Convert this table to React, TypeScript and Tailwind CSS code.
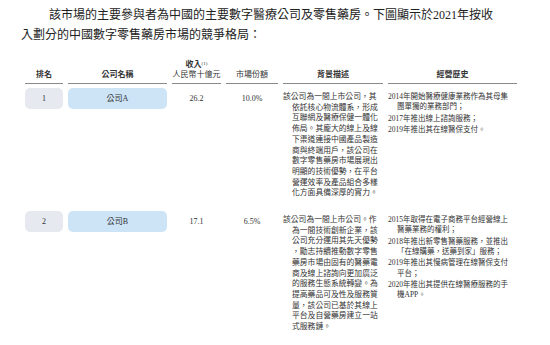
const cols = 'grid grid-cols-[38px_99px_49px_52px_100px_129px] gap-x-[5px]'

interface Row {
  rank: string
  name: string
  revenue: string
  share: string
  desc: string[]
  history: string[][]
}

const rows: Row[] = [
  {
    rank: '1',
    name: '公司A',
    revenue: '26.2',
    share: '10.0%',
    desc: [
      '該公司為一間上市公司，其',
      '依託核心物流體系，形成',
      '互聯網及醫療保健一體化',
      '佈局。其龐大的線上及線',
      '下渠道連接中國產品製造',
      '商與終端用戶，該公司在',
      '數字零售藥房市場展現出',
      '明顯的技術優勢，在平台',
      '營運效率及產品組合多樣',
      '化方面具備深厚的實力。',
    ],
    history: [
      ['2014年開始醫療健康業務作為其母集', '團單獨的業務部門；'],
      ['2017年推出線上諮詢服務；'],
      ['2019年推出其在線醫保支付。'],
    ],
  },
  {
    rank: '2',
    name: '公司B',
    revenue: '17.1',
    share: '6.5%',
    desc: [
      '該公司為一間上市公司。作',
      '為一間技術創新企業，該',
      '公司充分運用其先天優勢',
      '，勵志持續推動數字零售',
      '藥房市場由固有的醫藥電',
      '商及線上諮詢向更加廣泛',
      '的服務生態系統轉變。為',
      '提高藥品可及性及服務質',
      '量，該公司已基於其線上',
      '平台及自營藥房建立一站',
      '式服務鏈。',
    ],
    history: [
      ['2015年取得在電子商務平台經營線上', '醫藥業務的權利；'],
      ['2018年推出新零售醫藥服務，並推出', '「在線購藥，送藥到家」服務；'],
      ['2019年推出其慢病管理在線醫保支付', '平台；'],
      ['2020年推出其提供在線醫療服務的手', '機APP。'],
    ],
  },
]

function HeaderCell({ children }: { children: React.ReactNode }) {
  return (
    <div className="flex flex-col items-center justify-end border-b border-[#8a8a8a] pb-[3px] text-[8px] leading-[10px] font-bold text-[#333]">
      {children}
    </div>
  )
}

function TableRow({ row }: { row: Row }) {
  return (
    <div className={cols}>
      <div className="self-start flex h-[21px] items-center justify-center rounded-[5px] bg-[#e6e9f0] text-[8px] text-[#333]">
        {row.rank}
      </div>
      <div className="self-start flex h-[21px] items-center justify-center rounded-[5px] bg-[#cde3f6] text-[8px] text-[#333]">
        {row.name}
      </div>
      <div className="self-start flex h-[21px] items-center justify-center text-[8px] text-[#333]">
        {row.revenue}
      </div>
      <div className="self-start flex h-[21px] items-center justify-center text-[8px] text-[#333]">
        {row.share}
      </div>
      <div className="mt-[4px] text-[7.8px] leading-[10.7px] text-[#333]">
        {row.desc.map((line, i) => (
          <div key={i} className={i === 0 ? 'whitespace-nowrap' : 'whitespace-nowrap pl-[9px]'}>
            {line}
          </div>
        ))}
      </div>
      <div className="mt-[4px] flex flex-col gap-[1px] text-[7.5px] leading-[10.3px] text-[#333]">
        {row.history.map((item, i) => (
          <div key={i}>
            {item.map((line, j) => (
              <div key={j} className={j === 0 ? 'whitespace-nowrap' : 'whitespace-nowrap pl-[9px]'}>
                {line}
              </div>
            ))}
          </div>
        ))}
      </div>
    </div>
  )
}

export default function App() {
  return (
    <div className="h-[345px] w-[550px] overflow-hidden bg-white font-['Liberation_Serif','Noto_Sans_CJK_TC',serif] text-[#333]">
      <div className="pl-[21px] pt-[5px] text-[12px] leading-[20px] text-[#222]">
        <div className="whitespace-nowrap pl-[28px]">
          該市場的主要參與者為中國的主要數字醫療公司及零售藥房。下圖顯示於2021年按收
        </div>
        <div className="whitespace-nowrap">入劃分的中國數字零售藥房市場的競爭格局：</div>
      </div>

      <div className="mt-[15px] pl-[25px]">
        <div className={cols}>
          <HeaderCell>排名</HeaderCell>
          <HeaderCell>公司名稱</HeaderCell>
          <HeaderCell>
            <span>
              收入<sup className="text-[5px] font-normal">(1)</sup>
            </span>
            <span className="font-normal">人民幣十億元</span>
          </HeaderCell>
          <HeaderCell>
            <span className="font-normal">市場份額</span>
          </HeaderCell>
          <HeaderCell>背景描述</HeaderCell>
          <HeaderCell>經營歷史</HeaderCell>
        </div>

        <div className="mt-[4px] flex flex-col gap-[12px]">
          {rows.map((row) => (
            <TableRow key={row.rank} row={row} />
          ))}
        </div>
      </div>
    </div>
  )
}
